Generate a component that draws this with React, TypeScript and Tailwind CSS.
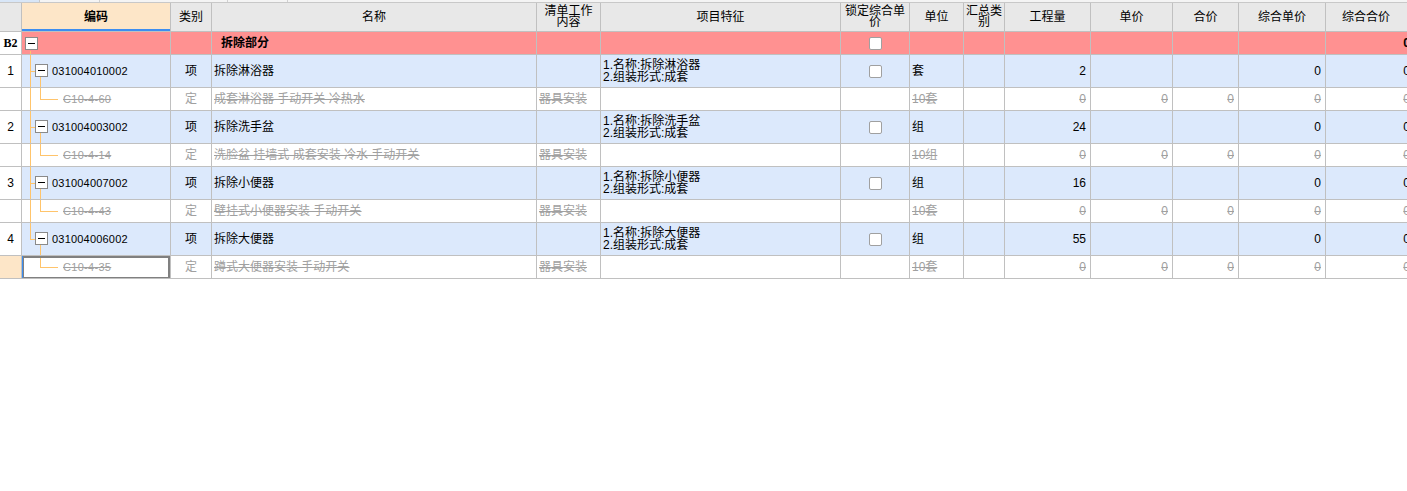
import React from "react";

type Item = {
  idx: string;
  code: string;
  name: string;
  feat: string[];
  unit: string;
  qty: string;
  def: { code: string; name: string; unit: string };
};

const items: Item[] = [
  {
    idx: "1",
    code: "031004010002",
    name: "拆除淋浴器",
    feat: ["1.名称:拆除淋浴器", "2.组装形式:成套"],
    unit: "套",
    qty: "2",
    def: { code: "C10-4-60", name: "成套淋浴器 手动开关 冷热水", unit: "10套" },
  },
  {
    idx: "2",
    code: "031004003002",
    name: "拆除洗手盆",
    feat: ["1.名称:拆除洗手盆", "2.组装形式:成套"],
    unit: "组",
    qty: "24",
    def: { code: "C10-4-14", name: "洗脸盆 挂墙式 成套安装 冷水 手动开关", unit: "10组" },
  },
  {
    idx: "3",
    code: "031004007002",
    name: "拆除小便器",
    feat: ["1.名称:拆除小便器", "2.组装形式:成套"],
    unit: "组",
    qty: "16",
    def: { code: "C10-4-43", name: "壁挂式小便器安装 手动开关", unit: "10套" },
  },
  {
    idx: "4",
    code: "031004006002",
    name: "拆除大便器",
    feat: ["1.名称:拆除大便器", "2.组装形式:成套"],
    unit: "组",
    qty: "55",
    def: { code: "C10-4-35", name: "蹲式大便器安装 手动开关", unit: "10套" },
  },
];

const cols =
  "grid grid-cols-[22px_149px_41px_325px_64px_240px_69px_54px_41px_86px_82px_66px_87px_90px]";

function Cell({ className = "", children }: { className?: string; children?: React.ReactNode }) {
  return (
    <div className={`relative border-r border-b border-[#c0c0c0] flex items-center overflow-hidden ${className}`}>
      {children}
    </div>
  );
}

function MinusBox({ className = "" }: { className?: string }) {
  return (
    <span className={`absolute w-[13px] h-[13px] bg-white border border-[#8a8a8a] flex items-center justify-center ${className}`}>
      <span className="block w-[7px] h-px bg-black" />
    </span>
  );
}

function Check() {
  return <span className="block w-[13px] h-[13px] bg-white border border-[#a0a0a0] rounded-[2px]" />;
}

const strike = "text-[#a0a0a0] line-through decoration-[#a0a0a0]";

export default function App() {
  return (
    <div className="w-[1407px] h-[491px] bg-white overflow-hidden font-['Liberation_Sans','Noto_Sans_CJK_SC',sans-serif] text-[12px] text-black leading-[12px]">
      {/* tab strip remnant */}
      <div className="h-[3px] flex border-b border-[#c8c8c8] bg-[#f4f4f4]">
        <div className="w-[40px] bg-[#d8e6f7] border-r border-[#c8c8c8]" />
        <div className="w-[60px] border-r border-[#d0d0d0]" />
        <div className="w-[128px] border-r border-[#d0d0d0]" />
        <div className="w-[60px] border-r border-[#d0d0d0]" />
      </div>

      <div className="w-[1407px] overflow-hidden">
        {/* header */}
        <div className={`${cols} h-[29px] bg-[#e8e8e8]`}>
          <Cell />
          <Cell className="justify-center bg-[#fde6c8] font-bold">
            编码
            <span className="absolute left-0 right-0 bottom-0 h-[2px] bg-[#3d8ef0]" />
          </Cell>
          <Cell className="justify-center">类别</Cell>
          <Cell className="justify-center">名称</Cell>
          <Cell className="justify-center text-center leading-[11px] px-1">清单工作内容</Cell>
          <Cell className="justify-center">项目特征</Cell>
          <Cell className="justify-center text-center leading-[11px]">锁定综合单价</Cell>
          <Cell className="justify-center">单位</Cell>
          <Cell className="justify-center text-center leading-[11px]">汇总类别</Cell>
          <Cell className="justify-center">工程量</Cell>
          <Cell className="justify-center">单价</Cell>
          <Cell className="justify-center">合价</Cell>
          <Cell className="justify-center">综合单价</Cell>
          <Cell className="justify-start pl-[16px]">综合合价</Cell>
        </div>

        {/* B2 section row */}
        <div className={`${cols} h-[23px] bg-[#ff9191]`}>
          <Cell className="justify-center bg-white font-bold font-['Liberation_Serif',serif]">B2</Cell>
          <Cell>
            <MinusBox className="left-[3px] top-[5px]" />
            <span className="absolute left-[8px] top-[19px] bottom-0 w-px bg-[#ffc46b]" />
          </Cell>
          <Cell />
          <Cell className="pl-[9px] font-bold">拆除部分</Cell>
          <Cell />
          <Cell />
          <Cell className="justify-center">
            <Check />
          </Cell>
          <Cell />
          <Cell />
          <Cell />
          <Cell />
          <Cell />
          <Cell />
          <Cell className="justify-end pr-[5px] font-bold">0</Cell>
        </div>

        {items.map((it, i) => {
          const last = i === items.length - 1;
          return (
            <React.Fragment key={it.idx}>
              <div className={`${cols} h-[33px] bg-[#dce9fc]`}>
                <Cell className="justify-center bg-white">{it.idx}</Cell>
                <Cell className="pl-[30px]">
                  {last ? (
                    <span className="absolute left-[8px] top-0 h-[16px] w-px bg-[#ffc46b]" />
                  ) : (
                    <span className="absolute left-[8px] top-0 bottom-0 w-px bg-[#ffc46b]" />
                  )}
                  <span className="absolute left-[8px] top-[16px] w-[6px] h-px bg-[#ffc46b]" />
                  <MinusBox className="left-[13px] top-[9px]" />
                  <span className="absolute left-[18px] top-[22px] bottom-0 w-px bg-[#ffc46b]" />
                  <span className="text-[11px] tracking-[0.2px]">{it.code}</span>
                </Cell>
                <Cell className="justify-center">项</Cell>
                <Cell className="pl-[2px]">{it.name}</Cell>
                <Cell />
                <Cell className="pl-[2px] flex-col items-start justify-center leading-[12px]">
                  {it.feat.map((f) => (
                    <span key={f}>{f}</span>
                  ))}
                </Cell>
                <Cell className="justify-center">
                  <Check />
                </Cell>
                <Cell className="pl-[2px]">{it.unit}</Cell>
                <Cell />
                <Cell className="justify-end pr-[4px]">{it.qty}</Cell>
                <Cell />
                <Cell />
                <Cell className="justify-end pr-[4px]">0</Cell>
                <Cell className="justify-end pr-[5px]">0</Cell>
              </div>

              <div className={`${cols} h-[23px] bg-white`}>
                <Cell className={last ? "bg-[#fde6c8]" : "bg-white"} />
                <Cell className="pl-[41px]">
                  {!last && <span className="absolute left-[8px] top-0 bottom-0 w-px bg-[#ffc46b]" />}
                  <span className="absolute left-[18px] top-0 h-[11px] w-px bg-[#ffc46b]" />
                  <span className="absolute left-[18px] top-[11px] w-[18px] h-px bg-[#ffc46b]" />
                  <span className={`text-[11px] tracking-[0.3px] ${strike}`}>{it.def.code}</span>
                  {last && (
                    <>
                      <span className="absolute inset-y-0 left-0 right-0 -bottom-px border-2 border-[#808080]" />
                      <span className="absolute left-[-1px] top-0 -bottom-px w-[2px] bg-[#3d8ef0]" />
                    </>
                  )}
                </Cell>
                <Cell className="justify-center text-[#a0a0a0]">定</Cell>
                <Cell className={`pl-[2px] ${strike}`}>
                  <span className="line-through">{it.def.name}</span>
                </Cell>
                <Cell className={`pl-[2px] ${strike}`}>器具安装</Cell>
                <Cell />
                <Cell />
                <Cell className={`pl-[2px] ${strike}`}>{it.def.unit}</Cell>
                <Cell />
                <Cell className={`justify-end pr-[4px] ${strike}`}>0</Cell>
                <Cell className={`justify-end pr-[4px] ${strike}`}>0</Cell>
                <Cell className={`justify-end pr-[4px] ${strike}`}>0</Cell>
                <Cell className={`justify-end pr-[4px] ${strike}`}>0</Cell>
                <Cell className={`justify-end pr-[5px] ${strike}`}>0</Cell>
              </div>
            </React.Fragment>
          );
        })}
      </div>
    </div>
  );
}
